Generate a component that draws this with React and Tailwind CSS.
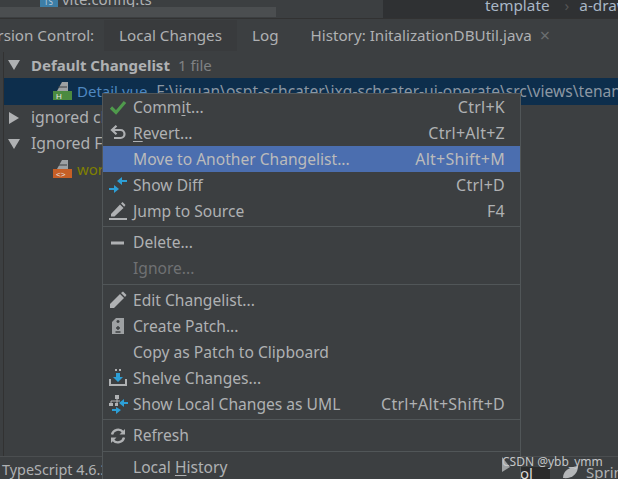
const Check = () => (<svg width="18" height="18" viewBox="0 0 18 18"><path d="M2 9.5 L7 14.5 L16 4" fill="none" stroke="#4f9a4c" strokeWidth="3.2"/></svg>);
const Revert = () => (<svg width="18" height="18" viewBox="0 0 18 18" fill="none" stroke="#afb1b3" strokeWidth="2.2"><path d="M4 6 H11.5 A4 4 0 0 1 11.5 14 H5"/><path d="M7.5 1.8 L3 6 L7.5 10.2"/></svg>);
const Diff = () => (<svg width="20" height="20" viewBox="0 0 20 20" fill="#2d9fd6"><path d="M1 13 H6 V10 L11 14 L6 18 V15 H1 Z"/><path d="M19 5 H14 V2 L9 6 L14 10 V7 H19 Z"/></svg>);
const Jump = () => (<svg width="20" height="20" viewBox="0 0 20 20" fill="#afb1b3"><path d="M3 13 L12 3.5 L15.5 7 L6.5 15.5 H3 Z"/><path d="M13 2.5 L14.5 1 L17.5 4 L16.2 5.8 Z"/><rect x="1" y="17" width="18" height="2"/></svg>);
const Minus = () => (<svg width="16" height="6" viewBox="0 0 16 6"><rect x="1" y="1.5" width="13" height="3" fill="#afb1b3"/></svg>);
const Pencil = () => (<svg width="18" height="18" viewBox="0 0 18 18" fill="#afb1b3"><path d="M1 13 L11 3 L15 7 L5 17 H1 Z"/><path d="M12 2 L14 0.5 L17.5 4 L16 6 Z"/></svg>);
const Patch = () => (<svg width="14" height="18" viewBox="0 0 14 18"><path d="M5 1 H13 V17 H1 V5 Z" fill="#9ea1a3"/><path d="M7 3 V6 M5.5 4.5 H8.5 M7 9 V13 M5 11 H9 M4.5 15 H9.5" stroke="#3c3f41" strokeWidth="1.4"/></svg>);
const Shelve = () => (<svg width="20" height="20" viewBox="0 0 20 20"><path d="M2 11 V17 H18 V11" fill="none" stroke="#afb1b3" strokeWidth="2"/><path d="M8 5 H12 V9 H15 L10 14 L5 9 H8 Z" fill="#2d9fd6"/><path d="M7 2 H9 M11 2 H13" stroke="#afb1b3" strokeWidth="2"/></svg>);
const Uml = () => (<svg width="20" height="20" viewBox="0 0 20 20"><path d="M7 1 H11 V5 H7 Z M1 9 H5 V12 H1 Z M7 9 H10 V12 H7 Z" fill="#afb1b3"/><path d="M9 5 V9 M3 9 V7 H12" stroke="#afb1b3" fill="none"/><path d="M20 8 H16 V5 L11 9 L16 13 V10 H20 Z" fill="#2d9fd6"/><path d="M4 15 H8 V13 L13 16 L8 20 V17 H4 Z" fill="#2d9fd6"/></svg>);
const Refresh = () => (<svg width="18" height="18" viewBox="0 0 18 18" fill="none" stroke="#afb1b3" strokeWidth="2.4"><path d="M3 7.5 A6.3 6.3 0 0 1 14 5"/><path d="M15 10.5 A6.3 6.3 0 0 1 4 13"/><path d="M16 2 V7.5 H10.5" fill="#afb1b3" stroke="none"/><path d="M2 16 V10.5 H7.5" fill="#afb1b3" stroke="none"/></svg>);
const FileBadge = ({ color, label }) => (
  <svg width="20" height="20" viewBox="0 0 20 20" className="shrink-0">
    <path d="M9 0 H15 V9 H4 Z" fill="#9ea1a3"/><path d="M5 5 H14" stroke="#3c3f41"/>
    <rect x="0" y="9" width="19" height="9" fill={color}/>
    <text x="3" y="17" fontSize="8" fill="#e8e8e8" fontFamily="Liberation Sans">{label}</text>
  </svg>
);
const Arrow = ({ down }) => (
  <svg width="12" height="12" viewBox="0 0 12 12" className="shrink-0" fill="#afb1b3">
    {down ? <path d="M0 1 H12 L6 11 Z"/> : <path d="M1 0 L11 6 L1 12 Z"/>}
  </svg>
);

const U = ({ children }) => <span className="underline underline-offset-2">{children}</span>;

const items = [
  { icon: <Check />, label: <>Comm<U>i</U>t...</>, key: "Ctrl+K" },
  { icon: <Revert />, label: <><U>R</U>evert...</>, key: "Ctrl+Alt+Z" },
  { label: "Move to Another Changelist...", key: "Alt+Shift+M", active: true },
  { icon: <Diff />, label: "Show Diff", key: "Ctrl+D" },
  { icon: <Jump />, label: "Jump to Source", key: "F4" },
  "sep",
  { icon: <Minus />, label: "Delete..." },
  { label: "Ignore...", disabled: true },
  "sep",
  { icon: <Pencil />, label: "Edit Changelist..." },
  { icon: <Patch />, label: "Create Patch..." },
  { label: "Copy as Patch to Clipboard" },
  { icon: <Shelve />, label: "Shelve Changes..." },
  { icon: <Uml />, label: "Show Local Changes as UML", key: "Ctrl+Alt+Shift+D" },
  "sep",
  { icon: <Refresh />, label: "Refresh" },
  "sep",
  { label: <>Local <U>H</U>istory</> },
];

export default function App() {
  return (
    <div className="relative w-[618px] h-[479px] overflow-hidden bg-[#3c3f41] text-[#afb1b3] text-[15px] leading-5 flex flex-col" style={{ fontFamily: '"Noto Sans", sans-serif' }}>
      {/* top strip */}
      <div className="h-[19px] shrink-0 flex border-b border-[#323232] overflow-hidden">
        <div className="w-[383px] relative">
          <div className="flex items-center gap-1 pl-10 -mt-[11px] h-5">
            <div className="w-[18px] h-[18px] bg-[#3d7ea6] text-[8px] text-[#bcd] pt-2 pl-1 shrink-0 leading-none">TS</div>
            <span>vite.config.ts</span>
          </div>
          <div className="absolute left-0 top-[7px] w-[276px] h-[10px] bg-[#4b4e50]"></div>
        </div>
        <div className="flex-1 bg-[#2f3133] flex pl-[102px] text-[15.3px] text-[#a9b7c6] whitespace-nowrap overflow-hidden">
          <span className="-mt-[5px]">template</span>
          <span className="text-[#555] -mt-[5px] ml-[15px]">›</span>
          <span className="-mt-[5px] ml-[10px]">a-drawer</span>
        </div>
      </div>
      {/* tabs */}
      <div className="h-[33px] shrink-0 flex items-center whitespace-nowrap text-[15.2px] pb-[2px]">
        <span className="-ml-[20px] w-[124px] shrink-0">Version Control:</span>
        <div className="w-[133px] h-[31px] mt-[2px] bg-[#393b3d] flex items-center justify-center shrink-0 pb-[2px]">Local Changes</div>
        <span className="ml-[15px]">Log</span>
        <span className="ml-[32px]">History: InitalizationDBUtil.java</span>
        <span className="ml-2 text-[#6b6e70] text-[18px]">×</span>
      </div>
      {/* tree */}
      <div className="flex-1 ml-[3px] border-l border-[#323232] flex flex-col whitespace-nowrap">
        <div className="h-[26px] flex items-center pl-[4px] gap-[11px]">
          <Arrow down />
          <span className="font-bold">Default Changelist</span>
          <span className="-ml-[3px] text-[#808284]">1 file</span>
        </div>
        <div className="h-[27px] bg-[#0d2e4c] flex items-center pl-[49px] gap-[4px] overflow-hidden">
          <FileBadge color="#4b8a3f" label="H" />
          <span className="text-[#4f88c0] pb-[2px]">Detail.vue</span>
          <span className="text-[#8b97a3] ml-[5px] text-[15.6px] pb-[2px]">F:\jiguan\ospt-schcater\ixg-schcater-ui-operate\src\views\tenant</span>
        </div>
        <div className="h-[26px] flex items-center pl-[4px] gap-[11px]">
          <Arrow />
          <span className="pb-[2px] text-[15.8px]">ignored changelist</span>
        </div>
        <div className="h-[26px] flex items-center pl-[4px] gap-[11px]">
          <Arrow down />
          <span className="pb-[2px] text-[15.8px]">Ignored Files</span>
        </div>
        <div className="h-[26px] flex items-center pl-[49px] gap-[4px]">
          <FileBadge color="#c65f26" label="<>" />
          <span className="text-[#808000] pb-[2px]">workspace.xml</span>
        </div>
      </div>
      {/* status bar */}
      <div className="h-[23px] shrink-0 border-t border-[#4b4e50] flex items-center pl-[2px] justify-between whitespace-nowrap">
        <span className="text-[14.4px] mt-[3px]">TypeScript 4.6.3</span>
        <div className="flex items-center h-full">
          <div className="w-[30px] h-[12px] mt-[10px] bg-[#2b2b2b] text-[#d8d8d8] leading-3 text-left">ol</div>
          <svg width="18" height="14" viewBox="0 0 18 14" className="ml-[12px] mt-2"><path d="M1 13 C1 5 8 2 16 1 C16 9 10 14 1 13 Z" fill="#b4b6b8"/></svg>
          <span className="ml-[6px] w-[32px] overflow-hidden mt-2">Spring</span>
        </div>
      </div>
      {/* menu */}
      <div className="absolute left-[102px] top-[93px] w-[419px] h-[400px] bg-[#3c3f41] border border-[#515658] flex flex-col text-[15.6px]">
        {items.map((it, i) =>
          it === "sep" ? (
            <div key={i} className="h-[5.5px] shrink-0 flex items-center"><div className="w-full h-px bg-[#515658]"></div></div>
          ) : (
            <div key={i} className={`h-[26px] shrink-0 flex items-center pr-[15px] whitespace-nowrap ${it.active ? "bg-[#4b6eaf] text-[#bbbbbb]" : ""} ${it.disabled ? "text-[#6f7173]" : ""}`}>
              <div className="w-[30px] shrink-0 flex justify-center">{it.icon}</div>
              <span className="pb-[1px]">{it.label}</span>
              {it.key && <span className="ml-auto text-[16px] tracking-[0.25px] pb-[1px]">{it.key}</span>}
            </div>
          )
        )}
      </div>
      {/* watermark */}
      <svg width="8" height="15" viewBox="0 0 8 15" className="absolute left-[502px] top-[457px]"><path d="M0 0 L8 10 L0 15 Z" fill="#9ea1a3"/></svg>
      <div className="absolute left-[502px] top-[452px] text-[12px] text-[#c4c6c8] whitespace-nowrap">CSDN @ybb_ymm</div>
    </div>
  );
}
